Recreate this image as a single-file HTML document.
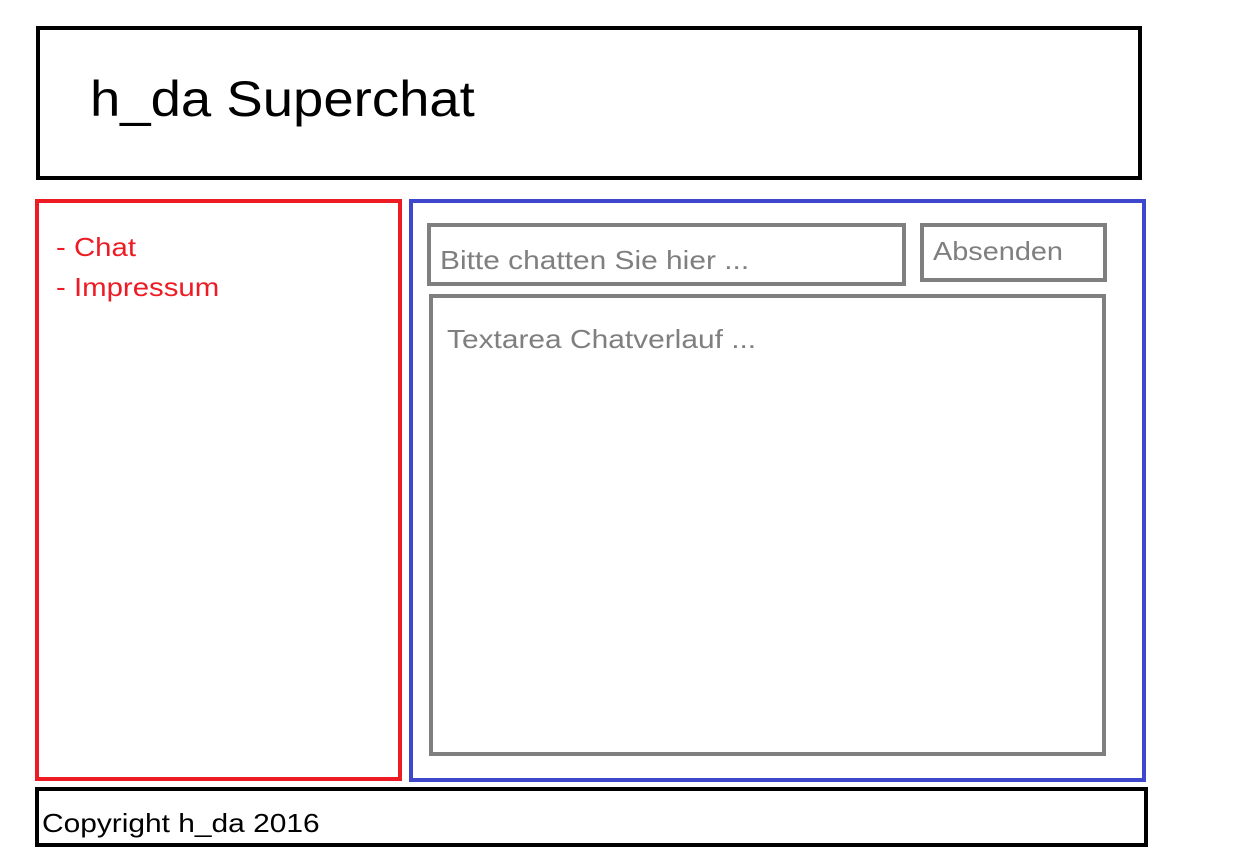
<!DOCTYPE html>
<html><head><meta charset="utf-8"><style>
body{margin:0;width:1236px;height:853px;background:#fff;position:relative;font-family:"Liberation Sans",sans-serif;overflow:hidden}
.b{position:absolute;box-sizing:border-box}
.t{position:absolute;white-space:nowrap;line-height:1;transform-origin:0 0}
</style></head><body>
<div class="b" style="left:36px;top:26px;width:1106px;height:154px;border:4px solid #000"></div>
<div class="t" style="left:90px;top:74px;font-size:50px;color:#000;transform:scaleX(1.09)">h_da Superchat</div>
<div class="b" style="left:35px;top:199px;width:367px;height:582px;border:4px solid #ed1c24"></div>
<div class="t" style="left:56px;top:234px;font-size:26px;color:#ed1c24;transform:scaleX(1.13)">- Chat</div>
<div class="t" style="left:56px;top:274px;font-size:26px;color:#ed1c24;transform:scaleX(1.13)">- Impressum</div>
<div class="b" style="left:409px;top:199px;width:737px;height:583px;border:4px solid #3f48cc"></div>
<div class="b" style="left:427px;top:223px;width:479px;height:63px;border:4px solid #7f7f7f"></div>
<div class="t" style="left:440px;top:247px;font-size:26px;color:#7f7f7f;transform:scaleX(1.15)">Bitte chatten Sie hier ...</div>
<div class="b" style="left:920px;top:223px;width:187px;height:59px;border:4px solid #7f7f7f"></div>
<div class="t" style="left:933px;top:238px;font-size:26px;color:#7f7f7f;transform:scaleX(1.11)">Absenden</div>
<div class="b" style="left:429px;top:294px;width:677px;height:462px;border:4px solid #7f7f7f"></div>
<div class="t" style="left:447px;top:326px;font-size:26px;color:#7f7f7f;transform:scaleX(1.15)">Textarea Chatverlauf ...</div>
<div class="b" style="left:35px;top:787px;width:1113px;height:60px;border:4px solid #000"></div>
<div class="t" style="left:42px;top:810px;font-size:26px;color:#000;transform:scaleX(1.15)">Copyright h_da 2016</div>
</body></html>
